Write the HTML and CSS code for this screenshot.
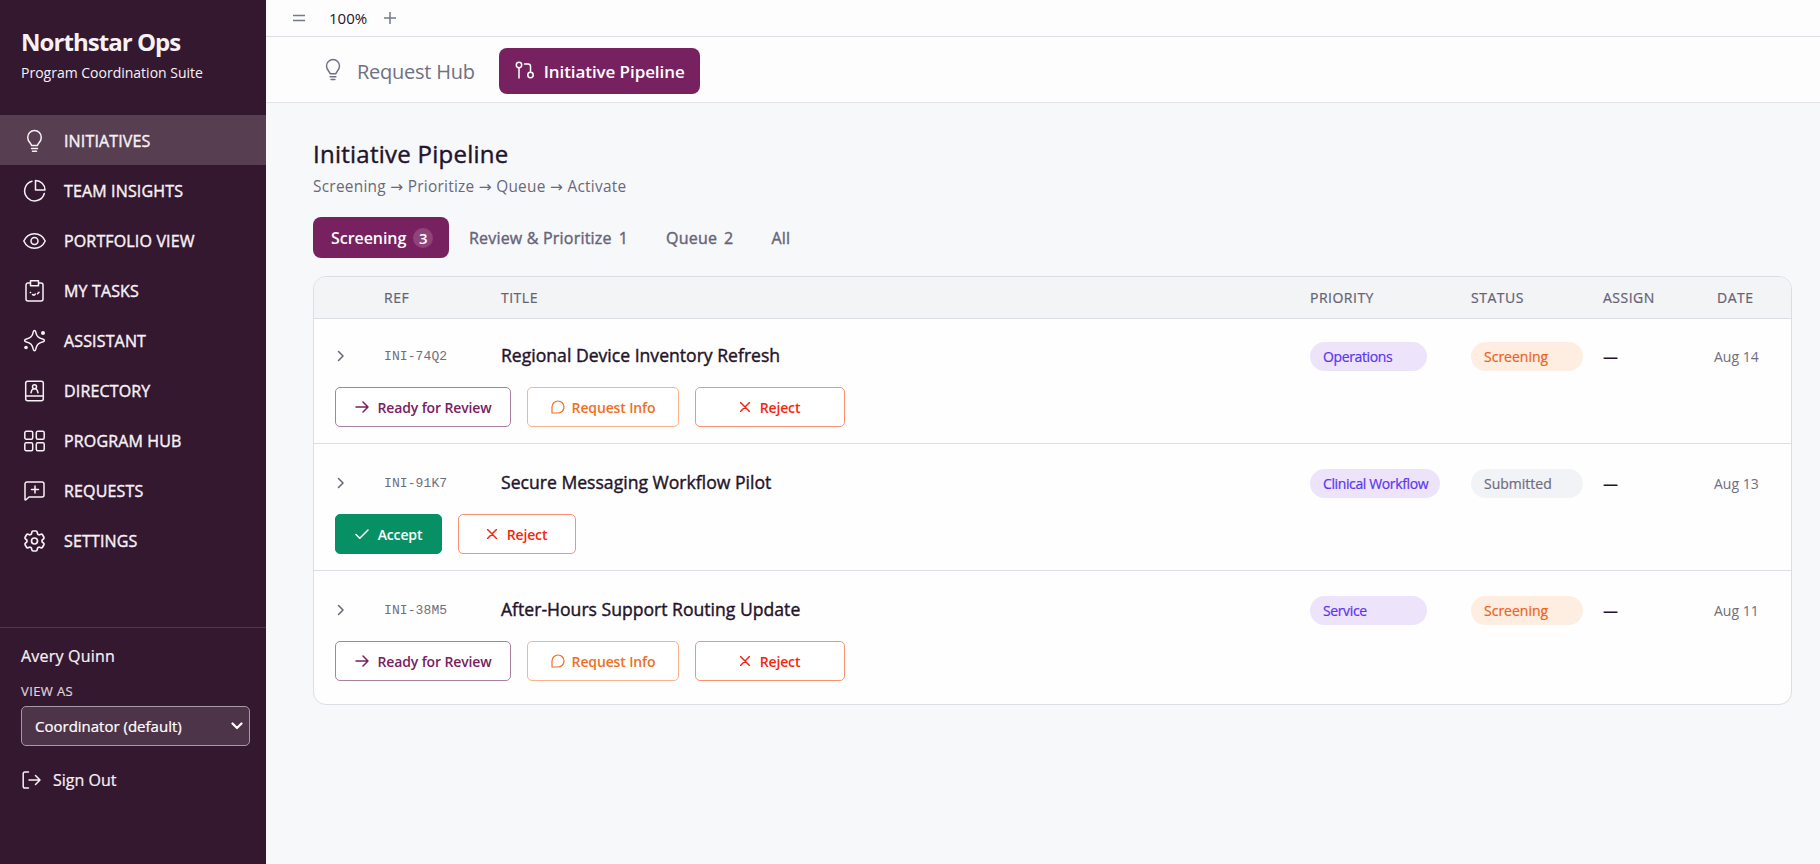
FILE: index.html
```
<!DOCTYPE html>
<html lang="en">
<head>
    <meta charset="UTF-8">
    <meta name="viewport" content="width=device-width, initial-scale=1.0">
    <title>Northstar Ops - Initiative Pipeline</title>
    <link rel="stylesheet" href="styles.css">
</head>
<body>
    <!-- Sidebar -->
    <aside class="sidebar">
        <div class="brand">
            <h1>Northstar Ops</h1>
            <p>Program Coordination Suite</p>
        </div>

        <nav class="nav">
            <a class="nav-item active" href="#">
                <svg class="icon" viewBox="0 0 24 24"><path d="M9 16.500c0-2-3.800-3.600-3.800-8.100a6.800 6.800 0 0 1 13.600 0c0 4.500-3.800 6.100-3.800 8.100zM9 19.500h6M10 22.300h4"/></svg>
                <span>INITIATIVES</span>
            </a>
            <a class="nav-item" href="#">
                <svg class="icon" viewBox="0 0 24 24"><path d="M9.500 2.200A10 10 0 1 0 21.800 14.500M13 1.500V11h9.500A9.500 9.500 0 0 0 13 1.500z"/></svg>
                <span>TEAM INSIGHTS</span>
            </a>
            <a class="nav-item" href="#">
                <svg class="icon" viewBox="0 0 24 24"><path d="M1.300 12C3.500 7.200 7.300 4.800 12 4.800S20.500 7.200 22.700 12c-2.200 4.800-6 7.200-10.700 7.200S3.500 16.800 1.300 12z"/><circle cx="12" cy="12" r="3.500"/></svg>
                <span>PORTFOLIO VIEW</span>
            </a>
            <a class="nav-item" href="#">
                <svg class="icon" viewBox="0 0 24 24"><path d="M8 4H5.500a2 2 0 0 0-2 2v14a2 2 0 0 0 2 2h13a2 2 0 0 0 2-2V6a2 2 0 0 0-2-2H16M8 1.800h8v5H8zM7.800 13.500h.3M10 15.500l1.500.8 1.300-1.200M15 14.800l1.500-1.500"/></svg>
                <span>MY TASKS</span>
            </a>
            <a class="nav-item" href="#">
                <svg class="icon" viewBox="0 0 24 24"><path d="M12 1.500c.8 0 1 .6 1.200 1.300 1 4.700 2.500 6.200 7.500 7.400 1.600.4 1.600 2.200 0 2.600-5 1.200-6.500 2.700-7.500 7.600-.4 1.700-2 1.700-2.400 0-1-4.900-2.500-6.400-7.500-7.600-1.600-.4-1.600-2.200 0-2.600 5-1.200 6.500-2.700 7.500-7.400.2-.7.400-1.300 1.200-1.300z"/><circle class="dot" cx="20.500" cy="4" r="2"/><circle class="dot" cx="3.500" cy="18.500" r="1.800"/></svg>
                <span>ASSISTANT</span>
            </a>
            <a class="nav-item" href="#">
                <svg class="icon" viewBox="0 0 24 24"><rect x="3.200" y="2.300" width="17.600" height="19.400" rx="2"/><path d="M3.500 17h17M8.500 13.800l.8-2.500c.3-1 1-1.500 2.700-1.500s2.400.5 2.700 1.500l.8 2.500"/><circle cx="12" cy="7.800" r="2"/></svg>
                <span>DIRECTORY</span>
            </a>
            <a class="nav-item" href="#">
                <svg class="icon" viewBox="0 0 24 24"><rect x="2.300" y="2.300" width="7.900" height="7.900" rx="1.500"/><rect x="13.800" y="2.300" width="7.900" height="7.900" rx="1.500"/><rect x="2.300" y="13.800" width="7.900" height="7.900" rx="1.500"/><rect x="13.800" y="13.800" width="7.900" height="7.900" rx="1.500"/></svg>
                <span>PROGRAM HUB</span>
            </a>
            <a class="nav-item" href="#">
                <svg class="icon" viewBox="0 0 24 24"><path d="M2.500 20.500V5a2 2 0 0 1 2-2h15a2 2 0 0 1 2 2v11a2 2 0 0 1-2 2H6.500l-3 2.700c-.5.400-1 .3-1-.2zM12.500 7v7M9 10.500h7"/></svg>
                <span>REQUESTS</span>
            </a>
            <a class="nav-item" href="#">
                <svg class="icon" viewBox="1.2 1.2 21.6 21.6"><path d="M9.594 3.940c.09-.542.56-.94 1.110-.94h2.593c.55 0 1.020.398 1.110.94l.213 1.281c.063.374.313.686.645.87.074.04.147.083.22.127.325.196.72.257 1.075.124l1.217-.456a1.125 1.125 0 0 1 1.370.49l1.296 2.247a1.125 1.125 0 0 1-.26 1.431l-1.003.827c-.293.241-.438.613-.43.992a7.723 7.723 0 0 1 0 .255c-.008.378.137.75.43.991l1.004.827c.424.35.534.955.26 1.430l-1.298 2.247a1.125 1.125 0 0 1-1.369.491l-1.217-.456c-.355-.133-.75-.072-1.076.124a6.470 6.470 0 0 1-.22.128c-.331.183-.581.495-.644.869l-.213 1.281c-.09.543-.56.94-1.110.94h-2.594c-.55 0-1.019-.398-1.110-.94l-.213-1.281c-.062-.374-.312-.686-.644-.87a6.520 6.520 0 0 1-.22-.127c-.325-.196-.72-.257-1.076-.124l-1.217.456a1.125 1.125 0 0 1-1.369-.49l-1.297-2.247a1.125 1.125 0 0 1 .26-1.431l1.004-.827c.292-.24.437-.613.43-.991a6.932 6.932 0 0 1 0-.255c.007-.38-.138-.751-.43-.992l-1.004-.827a1.125 1.125 0 0 1-.26-1.430l1.297-2.247a1.125 1.125 0 0 1 1.370-.491l1.216.456c.356.133.751.072 1.076-.124.072-.044.146-.086.22-.128.332-.183.582-.495.644-.869z"/><circle cx="12" cy="12" r="2.700"/></svg>
                <span>SETTINGS</span>
            </a>
        </nav>

        <div class="account">
            <div class="user-name">Avery Quinn</div>
            <div class="view-as">VIEW AS</div>
            <div class="role-select">
                <span>Coordinator (default)</span>
                <svg viewBox="0 0 12 8"><path d="M1.500 1.500 6 6l4.500-4.500"/></svg>
            </div>
            <a class="sign-out" href="#">
                <svg viewBox="0 0 20 18"><path d="M6.500 1H3a1.800 1.800 0 0 0-1.800 1.800v12.400A1.800 1.800 0 0 0 3 17h3.500M7 9h11M13.500 4.500 18 9l-4.500 4.500"/></svg>
                <span>Sign Out</span>
            </a>
        </div>
    </aside>

    <main class="main">
        <!-- Zoom controls -->
        <div class="zoom-bar">
            <svg viewBox="0 0 12 12"><path d="M0 3.500h12M0 8.500h12"/></svg>
            <span>100%</span>
            <svg viewBox="0 0 12 12"><path d="M0 6h12M6 0v12"/></svg>
        </div>

        <!-- Section tabs -->
        <div class="section-bar">
            <a class="section-link" href="#">
                <svg viewBox="0 0 24 24"><path d="M9 16.500c0-2-3.800-3.600-3.800-8.100a6.800 6.800 0 0 1 13.600 0c0 4.500-3.800 6.100-3.800 8.100zM9 19.500h6M10 22.500h4"/></svg>
                <span>Request Hub</span>
            </a>
            <a class="section-link current" href="#">
                <svg viewBox="0 0 20 18"><circle cx="4" cy="4" r="2.700"/><circle cx="15.500" cy="14" r="2.700"/><path d="M4 6.700V17M9.500 3H13a2.500 2.500 0 0 1 2.500 2.500v5.800"/></svg>
                <span>Initiative Pipeline</span>
            </a>
        </div>

        <div class="content">
            <h2>Initiative Pipeline</h2>
            <p class="steps">Screening <i>→</i> Prioritize <i>→</i> Queue <i>→</i> Activate</p>

            <div class="filters">
                <button class="filter selected">Screening <span class="count">3</span></button>
                <button class="filter">Review &amp; Prioritize <span>1</span></button>
                <button class="filter">Queue <span>2</span></button>
                <button class="filter">All</button>
            </div>

            <div class="table">
                <div class="cols table-head">
                    <span></span><span>REF</span><span>TITLE</span><span>PRIORITY</span><span>STATUS</span><span>ASSIGN</span><span class="date-head">DATE</span>
                </div>

                <div class="row">
                    <div class="cols">
                        <svg class="chevron" viewBox="0 0 8 12"><path d="m1.500 1.500 4.500 4.500-4.500 4.500"/></svg>
                        <span class="ref">INI-74Q2</span>
                        <span class="title">Regional Device Inventory Refresh</span>
                        <span class="pill priority">Operations</span>
                        <span class="pill screening">Screening</span>
                        <span class="assign">—</span>
                        <span class="date">Aug 14</span>
                    </div>
                    <div class="actions">
                        <button class="btn ready"><svg viewBox="0 0 14 12"><path d="M1 6h12M8 1l5 5-5 5"/></svg>Ready for Review</button>
                        <button class="btn info"><svg viewBox="0 0 14 14"><path d="M1 13V7a6 6 0 1 1 6 6z"/></svg>Request Info</button>
                        <button class="btn reject"><svg viewBox="0 0 10 10"><path d="m.5.5 9 9M9.500.5l-9 9"/></svg>Reject</button>
                    </div>
                </div>

                <div class="row">
                    <div class="cols">
                        <svg class="chevron" viewBox="0 0 8 12"><path d="m1.500 1.500 4.500 4.500-4.500 4.500"/></svg>
                        <span class="ref">INI-91K7</span>
                        <span class="title">Secure Messaging Workflow Pilot</span>
                        <span class="pill priority">Clinical Workflow</span>
                        <span class="pill submitted">Submitted</span>
                        <span class="assign">—</span>
                        <span class="date">Aug 13</span>
                    </div>
                    <div class="actions">
                        <button class="btn accept"><svg viewBox="0 0 14 10"><path d="m1 5.500 3.800 3.800L13 1"/></svg>Accept</button>
                        <button class="btn reject small"><svg viewBox="0 0 10 10"><path d="m.5.5 9 9M9.500.5l-9 9"/></svg>Reject</button>
                    </div>
                </div>

                <div class="row">
                    <div class="cols">
                        <svg class="chevron" viewBox="0 0 8 12"><path d="m1.500 1.500 4.500 4.500-4.500 4.500"/></svg>
                        <span class="ref">INI-38M5</span>
                        <span class="title">After-Hours Support Routing Update</span>
                        <span class="pill priority">Service</span>
                        <span class="pill screening">Screening</span>
                        <span class="assign">—</span>
                        <span class="date">Aug 11</span>
                    </div>
                    <div class="actions">
                        <button class="btn ready"><svg viewBox="0 0 14 12"><path d="M1 6h12M8 1l5 5-5 5"/></svg>Ready for Review</button>
                        <button class="btn info"><svg viewBox="0 0 14 14"><path d="M1 13V7a6 6 0 1 1 6 6z"/></svg>Request Info</button>
                        <button class="btn reject"><svg viewBox="0 0 10 10"><path d="m.5.5 9 9M9.500.5l-9 9"/></svg>Reject</button>
                    </div>
                </div>
            </div>
        </div>
    </main>
</body>
</html>
```
FILE: styles.css
```
* {
    box-sizing: border-box;
}
body {
    margin: 0;
    display: flex;
    height: 100vh;
    overflow: hidden;
    font-family: "Open Sans", "Noto Sans", sans-serif;
    background-color: #f7f8fa;
    color: #23132b;
}
h1, h2, p {
    margin: 0;
}
a {
    color: inherit;
    text-decoration: none;
}
svg {
    fill: none;
    stroke: currentColor;
    stroke-width: 1.5;
    stroke-linecap: round;
    stroke-linejoin: round;
    flex-shrink: 0;
}
button {
    font-family: inherit;
    cursor: pointer;
}

/* The font has no medium weight, so regular text is thickened a little */
.nav-item, .content h2, .filter, .title {
    -webkit-text-stroke: 0.4px currentColor;
}
.account, .table-head, .pill {
    -webkit-text-stroke: 0.22px currentColor;
}

/* Sidebar */
.sidebar {
    width: 266px;
    flex-shrink: 0;
    display: flex;
    flex-direction: column;
    background-color: #34182f;
    color: #f7f1f6;
}
.brand {
    height: 115px;
    padding: 26px 21px 0;
}
.brand h1 {
    font-size: 24px;
    line-height: 32px;
    font-weight: 700;
    letter-spacing: -0.95px;
}
.brand p {
    margin-top: 5px;
    font-size: 14px;
    line-height: 20px;
}
.nav-item {
    display: flex;
    align-items: center;
    gap: 17px;
    height: 49.9px;
    padding: 3px 22px 0;
    font-size: 16px;
    letter-spacing: 0.15px;
}
.nav-item.active {
    background-color: #573f51;
}
.icon {
    width: 25px;
    height: 24px;
}
.dot {
    fill: currentColor;
    stroke: none;
}
.account {
    margin-top: 63px;
    padding: 16px 16px 0 21px;
    border-top: 1px solid #513749;
    font-size: 16px;
}
.user-name {
    line-height: 24px;
    letter-spacing: 0.2px;
}
.view-as {
    margin-top: 14px;
    font-size: 13px;
    line-height: 18px;
    letter-spacing: 0.4px;
    color: #ddd1db;
}
.role-select {
    display: flex;
    align-items: center;
    justify-content: space-between;
    height: 40px;
    margin-top: 6px;
    padding: 0 6px 0 13px;
    border: 1px solid #a897a4;
    border-radius: 5px;
    background-color: #4d3448;
    color: #fff;
    font-size: 15px;
}
.role-select svg {
    width: 12px;
    height: 8px;
    stroke-width: 2.2;
}
.sign-out {
    display: flex;
    align-items: center;
    gap: 11px;
    margin-top: 22px;
    padding-left: 1px;
    line-height: 24px;
}
.sign-out svg {
    width: 20px;
    height: 18px;
}

/* Top bars */
.main {
    flex: 1;
    min-width: 0;
}
.zoom-bar {
    display: flex;
    align-items: center;
    height: 37px;
    padding-left: 27px;
    border-bottom: 1px solid #dcdfe8;
    background-color: #fdfdfe;
    font-size: 15px;
}
.zoom-bar span {
    width: 56px;
    padding-left: 1px;
}
.zoom-bar svg {
    width: 12px;
    height: 12px;
    color: #737a8c;
}
.zoom-bar svg:first-child {
    margin-right: 23px;
}
.section-bar {
    display: flex;
    align-items: center;
    gap: 24px;
    height: 66px;
    padding: 2px 0 0 55px;
    border-bottom: 1px solid #e3e5eb;
    background-color: #fdfdfe;
}
.section-link {
    display: flex;
    align-items: center;
    gap: 12px;
    font-size: 20px;
    letter-spacing: -0.25px;
    color: #6f7083;
}
.section-link span {
    padding-top: 2px;
}
.section-link svg {
    width: 24px;
    height: 23px;
    margin-bottom: 3px;
}
.section-link.current {
    width: 201px;
    height: 46px;
    padding-left: 16px;
    gap: 9px;
    border-radius: 8px;
    background-color: #782160;
    color: #fff;
    font-size: 17px;
    font-weight: 600;
    letter-spacing: -0.08px;
}
.section-link.current svg {
    width: 20px;
    height: 18px;
    margin-bottom: 1px;
}

/* Content */
.content {
    padding: 34px 28px 0 47px;
}
.content h2 {
    font-size: 24px;
    line-height: 34px;
    font-weight: 400;
    letter-spacing: 0.25px;
}
.steps {
    margin-top: 5px;
    font-size: 15.4px;
    line-height: 22px;
    letter-spacing: 0.27px;
    color: #6a687a;
}
.steps i {
    font-family: "DejaVu Sans", sans-serif;
    font-style: normal;
}
.filters {
    display: flex;
    margin-top: 19px;
}
.filter {
    display: flex;
    align-items: center;
    gap: 7px;
    height: 41px;
    padding: 0 18px 0 20px;
    border: none;
    border-radius: 8px;
    background: none;
    color: #676477;
    font-size: 16px;
    letter-spacing: 0.2px;
}
.filter.selected {
    width: 136px;
    padding: 0 0 0 18px;
    background-color: #782160;
    color: #fff;
    font-weight: 600;
    letter-spacing: -0.05px;
    -webkit-text-stroke: 0;
}
.count {
    width: 20px;
    height: 20px;
    border-radius: 50%;
    background-color: #8e4479;
    font-size: 15px;
    line-height: 20px;
    text-align: center;
}

/* Pipeline table */
.table {
    height: 429px;
    margin-top: 18px;
    border: 1px solid #dcdde5;
    border-radius: 13px;
    background-color: #fefefe;
    overflow: hidden;
}
.cols {
    display: grid;
    grid-template-columns: 50px 117px 809px 161px 132px 111px 1fr;
    align-items: center;
    height: 30px;
    padding-left: 20px;
}
.table-head {
    height: 42px;
    border-bottom: 1px solid #dcdde5;
    background-color: #f3f4f6;
    color: #656274;
    font-size: 14px;
    letter-spacing: 0.5px;
}
.date-head {
    padding-left: 3px;
}
.row {
    height: 127px;
    padding-top: 24px;
    border-bottom: 1px solid #dcdde5;
}
.table-head + .row {
    height: 125px;
    padding-top: 22px;
}
.row:last-child {
    height: 133px;
    border-bottom: none;
}
.chevron {
    width: 8px;
    height: 12px;
    margin-left: 3px;
    color: #676477;
}
.ref {
    font-family: "Liberation Mono", monospace;
    font-size: 13px;
    letter-spacing: 0.1px;
    color: #716e7e;
}
.title {
    padding-bottom: 3px;
    font-size: 17.6px;
}
.pill {
    justify-self: start;
    min-width: 117px;
    height: 29px;
    padding: 0 12px 0 13px;
    border-radius: 15px;
    font-size: 14px;
    line-height: 29px;
}
.priority {
    background-color: #ede4fb;
    color: #5b36f0;
    letter-spacing: -0.38px;
}
.screening,
.submitted {
    min-width: 112px;
}
.screening {
    background-color: #fdeee1;
    color: #f0621a;
}
.submitted {
    background-color: #f2f3f6;
    color: #706d7d;
}
.assign {
    font-size: 15px;
    font-weight: 700;
}
.date {
    font-size: 14px;
    color: #706d7d;
}
.actions {
    display: flex;
    gap: 16px;
    margin-top: 16px;
    padding-left: 21px;
}
.btn {
    display: flex;
    align-items: center;
    justify-content: center;
    gap: 9px;
    height: 40px;
    padding: 0;
    border: 1px solid;
    border-radius: 5px;
    background-color: #fff;
    font-size: 14px;
    font-weight: 600;
    letter-spacing: -0.14px;
}
.ready {
    width: 176px;
    border-color: #aa7fa0;
    color: #782160;
}
.ready svg {
    width: 14px;
    height: 12px;
}
.info {
    width: 152px;
    gap: 7px;
    border-color: #f9b48c;
    color: #f06f25;
}
.info svg {
    width: 14px;
    height: 14px;
    stroke-width: 1.2;
}
.reject {
    width: 150px;
    gap: 10px;
    border-color: #fa9272;
    color: #f5260f;
}
.reject svg {
    width: 10px;
    height: 10px;
}
.reject.small {
    width: 118px;
}
.accept {
    width: 107px;
    border-color: #089065;
    background-color: #089065;
    color: #fff;
}
.accept svg {
    width: 14px;
    height: 10px;
}
```
